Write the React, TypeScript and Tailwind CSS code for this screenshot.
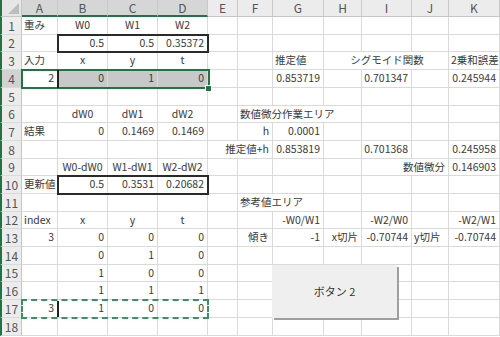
import React from "react";

type Align = "l" | "c" | "r";
type Cell = [number, string, Align];

const COLS = ["A", "B", "C", "D", "E", "F", "G", "H", "I", "J", "K"];

// row -> cells (column index 1 = A ... 11 = K)
const ROWS: Cell[][] = [
  [[1, "重み", "l"], [2, "W0", "c"], [3, "W1", "c"], [4, "W2", "c"]],
  [[2, "0.5", "r"], [3, "0.5", "r"], [4, "0.35372", "r"]],
  [[1, "入力", "l"], [2, "x", "c"], [3, "y", "c"], [4, "t", "c"], [7, "推定値", "l"], [9, "シグモイド関数", "c"], [11, "2乗和誤差", "l"]],
  [[1, "2", "r"], [2, "0", "r"], [3, "1", "r"], [4, "0", "r"], [7, "0.853719", "r"], [9, "0.701347", "r"], [11, "0.245944", "r"]],
  [],
  [[2, "dW0", "c"], [3, "dW1", "c"], [4, "dW2", "c"], [6, "数値微分作業エリア", "l"]],
  [[1, "結果", "l"], [2, "0", "r"], [3, "0.1469", "r"], [4, "0.1469", "r"], [6, "h", "r"], [7, "0.0001", "r"]],
  [[6, "推定値+h", "r"], [7, "0.853819", "r"], [9, "0.701368", "r"], [11, "0.245958", "r"]],
  [[2, "W0-dW0", "c"], [3, "W1-dW1", "c"], [4, "W2-dW2", "c"], [10, "数値微分", "r"], [11, "0.146903", "r"]],
  [[1, "更新値", "l"], [2, "0.5", "r"], [3, "0.3531", "r"], [4, "0.20682", "r"]],
  [[6, "参考値エリア", "l"]],
  [[1, "index", "l"], [2, "x", "c"], [3, "y", "c"], [4, "t", "c"], [7, "-W0/W1", "r"], [9, "-W2/W0", "r"], [11, "-W2/W1", "r"]],
  [[1, "3", "r"], [2, "0", "r"], [3, "0", "r"], [4, "0", "r"], [6, "傾き", "r"], [7, "-1", "r"], [8, "x切片", "r"], [9, "-0.70744", "r"], [10, "y切片", "l"], [11, "-0.70744", "r"]],
  [[2, "0", "r"], [3, "1", "r"], [4, "0", "r"]],
  [[2, "1", "r"], [3, "0", "r"], [4, "0", "r"]],
  [[2, "1", "r"], [3, "1", "r"], [4, "1", "r"]],
  [[1, "3", "r"], [2, "1", "r"], [3, "0", "r"], [4, "0", "r"]],
  [],
];

// cells whose right gridline is hidden by overflowing text: "row-col"
const NO_RIGHT = new Set(["3-8", "3-9", "6-6", "6-7", "8-5", "9-9", "11-6"]);

const alignClass: Record<Align, string> = {
  l: "justify-start pl-[2px]",
  c: "justify-center",
  r: "justify-end pr-[3px]",
};

export default function App() {
  return (
    <div
      className="relative w-[500px] h-[337px] overflow-hidden bg-white text-[#3a3a3a] text-[10.5px] leading-none"
      style={{ fontFamily: '"Noto Sans CJK JP", "Noto Sans", sans-serif' }}
    >
      <div className="grid grid-cols-[22px_36px_50px_50px_50px_30px_35px_51px_38px_50px_37px_51px] grid-rows-[17px_18px_17px_18px_18px_18px_17px_18px_18px_17px_18px_18px_17px_18px_18px_17px_18px_18px_18px]">
        {/* corner */}
        <div className="relative bg-[#e6e6e6] border-l-2 border-l-[#217346] border-r border-b border-[#c6c6c6]">
          <div className="absolute right-[2px] bottom-[2px] w-0 h-0 border-l-[11px] border-l-transparent border-b-[11px] border-b-[#bdbdbd]" />
        </div>
        {/* column headers */}
        {COLS.map((c, i) => {
          const sel = i < 4;
          return (
            <div
              key={c}
              className={`flex items-center justify-center border-r border-[#c9c9c9] text-[12px] text-[#555] ${
                sel ? "bg-[#d6d6d6] border-b-2 border-b-[#217346]" : "bg-[#ececec] border-b border-b-[#c6c6c6]"
              }`}
            >
              {c}
            </div>
          );
        })}

        {ROWS.map((cells, r) => {
          const row = r + 1;
          const byCol = new Map(cells.map((c) => [c[0], c]));
          return (
            <React.Fragment key={row}>
              <div
                className={`flex items-center justify-center border-l-2 border-l-[#217346] border-r border-r-[#c6c6c6] border-b border-b-[#dadada] text-[12px] text-[#555] ${
                  row === 4 ? "bg-[#d2d2d2]" : "bg-[#ececec]"
                }`}
              >
                {row}
              </div>
              {COLS.map((_, i) => {
                const col = i + 1;
                const cell = byCol.get(col);
                const shaded = row === 4 && col >= 2 && col <= 4;
                const noRight = NO_RIGHT.has(`${row}-${col}`);
                return (
                  <div
                    key={col}
                    className={`flex items-center whitespace-nowrap border-b border-[#dadada] ${
                      noRight ? "" : "border-r"
                    } ${shaded ? "bg-[#c8c8c8]" : ""} ${cell ? alignClass[cell[2]] : ""}`}
                  >
                    {cell && <span className="shrink-0">{cell[1]}</span>}
                  </div>
                );
              })}
            </React.Fragment>
          );
        })}
      </div>

      {/* thick borders */}
      <div className="absolute left-[57px] top-[34px] w-[152px] h-[19px] border-2 border-[#2a2a2a]" />
      <div className="absolute left-[57px] top-[175px] w-[152px] h-[20px] border-2 border-[#2a2a2a]" />

      {/* selection A4:D4 */}
      <div className="absolute left-[21px] top-[69px] w-[189px] h-[20px] border-2 border-[#217346]" />
      <div className="absolute left-[206px] top-[86px] w-[5px] h-[5px] bg-[#217346] outline outline-1 outline-white" />
      <div className="absolute left-[57px] top-[70px] w-[2px] h-[18px] bg-[#222]" />

      {/* copy marquee A17:D17 */}
      <div className="absolute left-[21px] top-[299px] w-[188px] h-[20px] border-2 border-dashed border-[#3f8f62]" />
      <div className="absolute left-[57px] top-[301px] w-[2px] h-[16px] bg-[#222]" />

      {/* form button */}
      <div className="absolute left-[272px] top-[265px] w-[125px] h-[53px] flex items-center justify-center bg-[#efefef] shadow-[2px_2px_0_#9f9f9f] text-[11px] text-[#333]">
        ボタン 2
      </div>
    </div>
  );
}
